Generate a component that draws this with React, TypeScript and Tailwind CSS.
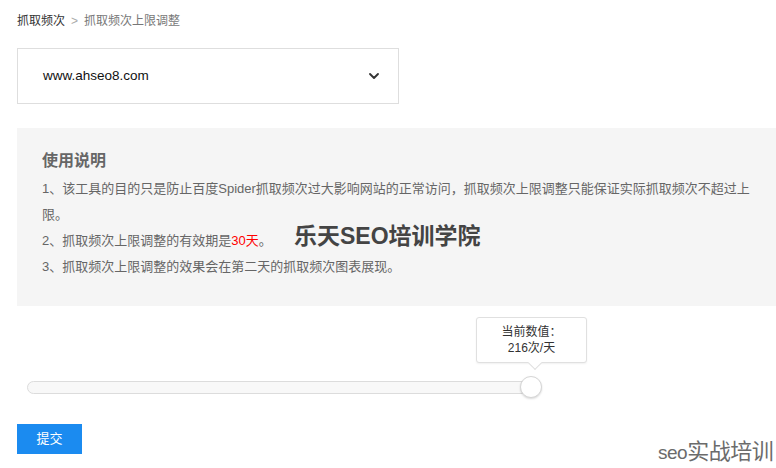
import { ChevronDown } from 'lucide-react';

const font = "font-['Liberation_Sans','Noto_Sans_CJK_SC',sans-serif]";

function Breadcrumb() {
  return (
    <div className="flex h-[40px] items-center gap-[6px] pt-[1px] text-[12px] leading-none">
      <span className="text-[#333]">抓取频次</span>
      <span className="text-[#aaa]">&gt;</span>
      <span className="text-[#777]">抓取频次上限调整</span>
    </div>
  );
}

function SiteSelect() {
  return (
    <div className="mt-[8px] flex h-[56px] w-[382px] items-center justify-between border border-[#dedede] bg-white pl-[25px] pr-[16px]">
      <span className="text-[13.5px] text-[#111]">www.ahseo8.com</span>
      <ChevronDown className="h-[16px] w-[16px] text-[#333]" strokeWidth={2.8} />
    </div>
  );
}

function Notes() {
  return (
    <div className="relative mt-[24px] w-[765px] bg-[#f5f5f5] pb-[26px] pl-[25px] pt-[21px] text-[#666]">
      <h2 className="mb-[3px] text-[16px] font-bold leading-[24px]">使用说明</h2>
      <div className="w-[715px] text-[13px] leading-[26px]">
        <p>1、该工具的目的只是防止百度Spider抓取频次过大影响网站的正常访问，抓取频次上限调整只能保证实际抓取频次不超过上限。</p>
        <p>
          2、抓取频次上限调整的有效期是<span className="text-[#f00]">30天</span>。
        </p>
        <p>3、抓取频次上限调整的效果会在第二天的抓取频次图表展现。</p>
      </div>
      <span className="absolute left-[277px] top-[97px] text-[23px] font-bold leading-none text-[#444]">
        乐天SEO培训学院
      </span>
    </div>
  );
}

function FrequencySlider() {
  return (
    <div className="relative ml-[10px] mt-[75px] h-[13px] w-[509px] rounded-full border border-[#dcdcdc] bg-[#f8f8f8]">
      <div className="absolute left-[448px] top-[-65px] flex h-[46px] w-[111px] flex-col items-center justify-center rounded-[3px] border border-[#e0e0e0] bg-white text-[12px] leading-[16px] text-[#333] shadow-[0_1px_2px_rgba(0,0,0,0.06)]">
        <span>当前数值：</span>
        <span>216次/天</span>
        <span className="absolute bottom-[-6px] left-[53px] h-[10px] w-[10px] rotate-45 border-b border-r border-[#e0e0e0] bg-white" />
      </div>
      <div className="absolute left-[492px] top-[-6px] h-[22px] w-[22px] rounded-full border border-[#d6d6d6] bg-white shadow-[0_1px_2px_rgba(0,0,0,0.15)]" />
    </div>
  );
}

export default function App() {
  return (
    <div className={`${font} relative h-[468px] w-[776px] overflow-hidden bg-white pl-[17px]`}>
      <Breadcrumb />
      <SiteSelect />
      <Notes />
      <FrequencySlider />
      <button
        type="button"
        className="mt-[30px] h-[30px] w-[65px] bg-[#1b8bf0] text-[13px] text-white"
      >
        提交
      </button>
      <span className="absolute left-[658px] top-[441px] flex items-baseline leading-none text-[#6b6b6b]">
        <span className="text-[19px] tracking-[-0.5px]">seo</span>
        <span className="text-[22px] tracking-[-0.5px]">实战培训</span>
      </span>
    </div>
  );
}
